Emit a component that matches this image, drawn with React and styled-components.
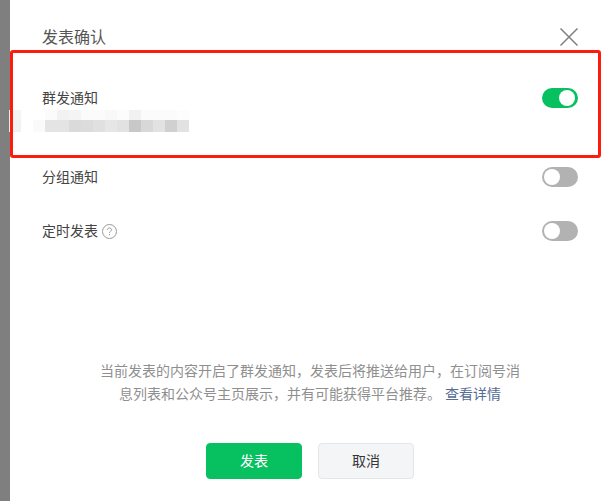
import React from 'react'
import styled, { createGlobalStyle } from 'styled-components'

const GlobalStyle = createGlobalStyle`
  html, body {
    margin: 0;
    padding: 0;
    width: 605px;
    height: 501px;
    overflow: hidden;
    background: #fff;
  }
  body {
    font-family: "Noto Sans CJK SC", "Liberation Sans", sans-serif;
  }
`

const mosaicRows = [
  ['#f4f4f4', '#fff', '#fff', '#fbfbfb', '#f2f2f2', '#f4f4f4', '#fbfbfb', '#fbfbfb', '#f8f8f8', '#fcfcfc', '#f1f1f1', '#fbfbfb', '#fbfbfb', '#fbfbfb', '#fdfdfd'],
  ['#f1f1f1', '#fff', '#fafafa', '#e4e4e4', '#e4e4e4', '#dadada', '#dcdcdc', '#e0e0e0', '#e6e6e6', '#e2e2e2', '#c8c8c8', '#d8d8d8', '#e2e2e2', '#d0d0d0', '#e2e2e2'],
]

const Switch = ({ on }) => (
  <Track $on={on}>
    <Knob />
  </Track>
)

const App = () => {
  return (
    <Page>
      <GlobalStyle />
      <Backdrop />
      <Dialog>
        <Header>
          <Title>发表确认</Title>
          <CloseIcon viewBox="0 0 18 18">
            <path d="M0.5 0.5L17.5 17.5M17.5 0.5L0.5 17.5" />
          </CloseIcon>
        </Header>

        <Options>
          <Option>
            <OptionBody>
              <Label>群发通知</Label>
              <Mosaic viewBox="0 0 180 22">
                {mosaicRows.map((row, r) =>
                  row.map((color, c) => (
                    <rect key={`${r}-${c}`} x={c * 12} y={r === 0 ? 0 : 10} width="12" height={r === 0 ? 10 : 12} fill={color} />
                  ))
                )}
              </Mosaic>
            </OptionBody>
            <Switch on />
          </Option>
          <Option>
            <Label>分组通知</Label>
            <Switch />
          </Option>
          <Option>
            <Label>
              定时发表
              <HelpIcon viewBox="0 0 15 15">
                <circle cx="7.5" cy="7.5" r="7" />
                <path d="M5.4 5.9C5.4 4.7 6.3 4 7.5 4C8.7 4 9.6 4.8 9.6 5.8C9.6 7.1 7.5 7.3 7.5 8.9" />
                <path d="M7.5 10V11.2" />
              </HelpIcon>
            </Label>
            <Switch />
          </Option>
        </Options>

        <Footer>
          <Notice>
            当前发表的内容开启了群发通知，发表后将推送给用户，在订阅号消息列表和公众号主页展示，并有可能获得平台推荐。
            <NoticeLink>查看详情</NoticeLink>
          </Notice>
          <Actions>
            <Button $primary>发表</Button>
            <Button>取消</Button>
          </Actions>
        </Footer>
      </Dialog>
      <Highlight />
    </Page>
  )
}

const Page = styled.div`
  position: relative;
  display: flex;
  width: 605px;
  height: 501px;
  overflow: hidden;
`

const Backdrop = styled.div`
  width: 10px;
  flex: none;
  background: #7f7f7f;
`

const Dialog = styled.div`
  flex: 1;
  display: flex;
  flex-direction: column;
  background: #fff;
  padding: 25px 27px 22px 32px;
`

const Header = styled.div`
  display: flex;
  align-items: flex-start;
  justify-content: space-between;
  height: 24px;
`

const Title = styled.div`
  font-size: 16px;
  line-height: 22px;
  color: #555;
`

const CloseIcon = styled.svg`
  width: 18px;
  height: 18px;
  margin-top: 3px;
  fill: none;
  stroke: #808080;
  stroke-width: 1.5;
`

const Options = styled.div`
  display: flex;
  flex-direction: column;
  gap: 34px;
  margin-top: 39px;
`

const Option = styled.div`
  display: flex;
  align-items: flex-start;
  justify-content: space-between;
`

const OptionBody = styled.div`
  display: flex;
  flex-direction: column;
`

const Label = styled.div`
  display: flex;
  align-items: center;
  font-size: 14px;
  line-height: 18px;
  color: #444;
`

const Mosaic = styled.svg`
  display: block;
  width: 180px;
  height: 22px;
  margin: 4px 0 1px -33px;
`

const HelpIcon = styled.svg`
  width: 15px;
  height: 15px;
  margin: 3px 0 0 4px;
  fill: none;
  stroke: #999;
  stroke-width: 1;
`

const Track = styled.div`
  display: flex;
  justify-content: ${(p) => (p.$on ? 'flex-end' : 'flex-start')};
  align-items: center;
  box-sizing: border-box;
  flex: none;
  width: 36px;
  height: 20px;
  padding: ${(p) => (p.$on ? '2px 3px 2px 2px' : '2px')};
  border-radius: 10px;
  background: ${(p) => (p.$on ? '#07c160' : '#b2b2b2')};
`

const Knob = styled.div`
  width: 16px;
  height: 16px;
  border-radius: 50%;
  background: #fff;
`

const Footer = styled.div`
  display: flex;
  flex-direction: column;
  align-items: center;
  margin-top: auto;
`

const Notice = styled.p`
  width: 420px;
  margin: 0;
  font-size: 14px;
  line-height: 22.4px;
  text-align: center;
  color: #8f8f8f;
`

const NoticeLink = styled.a`
  margin-left: 4px;
  color: #576b95;
`

const Actions = styled.div`
  display: flex;
  gap: 16px;
  margin-top: 39px;
`

const Button = styled.button`
  box-sizing: border-box;
  width: 96px;
  height: 36px;
  padding: 0 0 2px;
  border-radius: 4px;
  font-family: inherit;
  font-size: 14px;
  border: 1px solid ${(p) => (p.$primary ? '#07c160' : '#e4e6ea')};
  background: ${(p) => (p.$primary ? '#07c160' : '#f4f5f7')};
  color: ${(p) => (p.$primary ? '#fff' : '#353535')};
`

const Highlight = styled.div`
  position: absolute;
  left: 10px;
  top: 50px;
  width: 591px;
  height: 108px;
  box-sizing: border-box;
  border: 3px solid #ff1a0e;
  border-radius: 3px;
  pointer-events: none;
`

export default App
